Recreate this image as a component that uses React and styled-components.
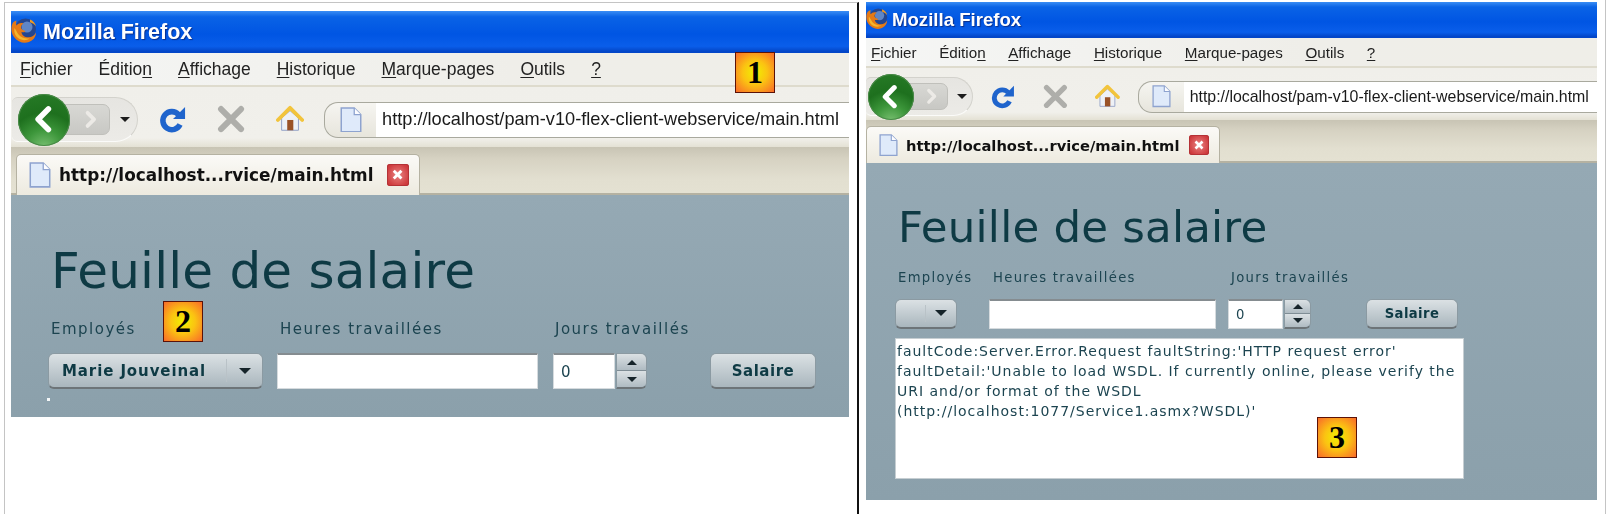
import React from 'react';
import styled, { createGlobalStyle, ThemeProvider } from 'styled-components';

const GlobalStyle = createGlobalStyle`
	html, body {
		margin: 0;
		padding: 0;
		background: #fff;
	}
`;

const large = {
	titleH: 42, titleFont: 21.5, titleGap: 6, logo: 26, menuH: 34, menuFont: 17.5, menuGap: 26, menuPad: 9,
	navH: 60, backSize: 52, clusterW: 126, clusterLeft: 1, clusterPad: 6, urlH: 34, urlFont: 18.2,
	tabStripH: 48, tabStripPad: 5, tabW: 404, tabH: 41, tabFont: 16.9, tabIcon: 22, closeSize: 22,
	contentPad: '49px 0 0 37px', headingFont: 50, headingMargin: 19,
	labelFont: 15, labelH: 21, labelSpacing: 1.5, rowMargin: 14, fieldH: 36, valueFont: 15, valueSpacing: 0.9, btnSpacing: 0.5,
	comboW: 215, comboArrow: 35, textW: 261, numW: 62, spinW: 31, btnW: 106,
	gapA: 14, gapB: 15, gapC: 63, labelA: 229, labelB: 275,
};

const small = {
	titleH: 36, titleFont: 18.6, titleGap: 4, logo: 22, menuH: 30, menuFont: 15.2, menuGap: 22.6, menuPad: 5,
	navH: 52, backSize: 46, clusterW: 107, clusterLeft: 0, clusterPad: 2, urlH: 30, urlFont: 15.9,
	tabStripH: 43, tabStripPad: 0, tabW: 354, tabH: 37, tabFont: 14.7, tabIcon: 19, closeSize: 20,
	contentPad: '41px 0 0 29px', headingFont: 43.5, headingMargin: 17,
	labelFont: 13.2, labelH: 18, labelSpacing: 1.3, rowMargin: 12, fieldH: 30, valueFont: 13.2, valueSpacing: 0.6, btnSpacing: 0.4,
	comboW: 62, comboArrow: 30, textW: 227, numW: 55, spinW: 27, btnW: 92,
	gapA: 32, gapB: 12, gapC: 55, labelA: 95, labelB: 238,
};

const Page = styled.div`
	position: relative;
	width: 1610px;
	height: 514px;
	display: flex;
	align-items: flex-start;
	overflow: hidden;
	background: #fff;
`;

const LeftPane = styled.section`
	box-sizing: border-box;
	width: 855px;
	height: 514px;
	margin-left: 4px;
	margin-top: 2px;
	padding: 8px 0 0 6px;
	border-top: 1px solid #c4c4c4;
	border-left: 1px solid #c4c4c4;
	border-right: 2px solid #111;
`;

const RightPane = styled.section`
	box-sizing: border-box;
	width: 747px;
	height: 514px;
	padding: 2px 0 0 7px;
	border-right: 1px solid #c4c4c4;
`;

const Window = styled.div`
	position: relative;
	width: ${(p) => p.$width}px;
	height: ${(p) => p.$height}px;
	display: flex;
	flex-direction: column;
	font-family: "DejaVu Sans", Verdana, sans-serif;
	filter: blur(0.35px);
`;

const TitleBar = styled.header`
	flex: none;
	height: ${(p) => p.theme.titleH}px;
	display: flex;
	align-items: center;
	gap: ${(p) => p.theme.titleGap}px;
	background: linear-gradient(#3a8df4 0%, #0a63e6 14%, #0055e3 55%, #0a5eea 84%, #0346c8 96%);
`;

const TitleText = styled.span`
	color: #fff;
	font-family: "Liberation Sans", Arial, sans-serif;
	font-weight: 700;
	font-size: ${(p) => p.theme.titleFont}px;
	text-shadow: 1px 1px 1px #0b2f8a;
`;

const MenuBar = styled.nav`
	flex: none;
	box-sizing: border-box;
	height: ${(p) => p.theme.menuH}px;
	display: flex;
	align-items: center;
	gap: ${(p) => p.theme.menuGap}px;
	padding-left: ${(p) => p.theme.menuPad}px;
	background: linear-gradient(90deg, #f5f6f5, #efeee9 60%, #efeee8);
	border-bottom: 2px solid #dedbcd;
	font-family: "Liberation Sans", Arial, sans-serif;
	font-size: ${(p) => p.theme.menuFont}px;
	color: #222;
`;

const MenuItem = styled.span`
	u {
		text-underline-offset: 2px;
		text-decoration-thickness: 1px;
	}
`;

const NavBar = styled.div`
	flex: none;
	box-sizing: border-box;
	height: ${(p) => p.theme.navH}px;
	display: flex;
	align-items: center;
	padding-top: 5px;
	background: linear-gradient(#f0efea, #f1f0eb 85%, #e4e1d4);
	overflow: hidden;
`;

const BackCluster = styled.div`
	flex: none;
	box-sizing: border-box;
	display: flex;
	align-items: center;
	width: ${(p) => p.theme.clusterW}px;
	height: ${(p) => p.theme.backSize * 0.86}px;
	margin-left: ${(p) => p.theme.clusterLeft}px;
	padding-left: ${(p) => p.theme.clusterPad}px;
	background: linear-gradient(#e6e5e1, #ecebe7);
	border: 1px solid #d3d2cc;
	border-left: none;
	border-bottom-color: #fbfbf9;
	border-radius: 6px 24px 24px 6px;
`;

const BackButton = styled.div`
	flex: none;
	display: flex;
	align-items: center;
	justify-content: center;
	width: ${(p) => p.theme.backSize}px;
	height: ${(p) => p.theme.backSize}px;
	border-radius: 50%;
	background: radial-gradient(circle at 50% 105%, #7cc274 0%, #3c963a 32%, #1e701e 60%, #287c28 100%);
	box-shadow: inset 0 0 0 1px #4a8a48;
	z-index: 1;
`;

const ForwardButton = styled.div`
	flex: none;
	box-sizing: border-box;
	display: flex;
	align-items: center;
	justify-content: center;
	width: ${(p) => p.theme.backSize * 0.96}px;
	height: ${(p) => p.theme.backSize * 0.6}px;
	margin-left: -10px;
	padding-left: 10px;
	background: linear-gradient(#d8d8d4, #c8c8c4);
	border: 1px solid #c0c0bb;
	border-radius: 0 7px 7px 0;
`;

const DropCaret = styled.div`
	width: 0;
	height: 0;
	margin-left: ${(p) => p.theme.backSize * 0.19}px;
	border-left: 5px solid transparent;
	border-right: 5px solid transparent;
	border-top: 5px solid #1c1c1c;
`;

const NavIcons = styled.div`
	flex: none;
	display: flex;
	align-items: center;
	gap: ${(p) => p.theme.backSize * 0.6}px;
	padding: 0 ${(p) => p.theme.backSize * 0.38}px;
`;

const UrlBar = styled.div`
	flex: 1;
	display: flex;
	align-items: center;
	min-width: 0;
	height: ${(p) => p.theme.urlH}px;
	border: 1px solid #a9a99e;
	border-right: none;
	border-radius: 14px 0 0 14px;
	background: linear-gradient(#f6f5f1, #e7e5dc);
	overflow: hidden;
`;

const UrlIcon = styled.div`
	flex: none;
	display: flex;
	justify-content: center;
	width: ${(p) => p.theme.backSize * 0.98}px;
`;

const UrlInput = styled.div`
	flex: 1;
	height: 100%;
	display: flex;
	align-items: center;
	padding-left: 6px;
	background: #fff;
	white-space: nowrap;
	font-family: "Liberation Sans", Arial, sans-serif;
	font-size: ${(p) => p.theme.urlFont}px;
	color: #1a1a1a;
`;

const TabStrip = styled.div`
	flex: none;
	box-sizing: border-box;
	height: ${(p) => p.theme.tabStripH}px;
	display: flex;
	align-items: flex-end;
	padding-left: ${(p) => p.theme.tabStripPad}px;
	background: linear-gradient(#c8c4b4, #d6d2c2 25%, #e2dfd0 70%, #e4e1d2);
	border-bottom: 2px solid #b5b2a2;
`;

const Tab = styled.div`
	box-sizing: border-box;
	width: ${(p) => p.theme.tabW}px;
	height: ${(p) => p.theme.tabH}px;
	margin-bottom: -2px;
	display: flex;
	align-items: center;
	padding: 0 10px 0 12px;
	background: linear-gradient(#fbfaf7, #edeadf);
	border: 1px solid #b5b2a2;
	border-bottom: none;
	border-radius: 5px 5px 0 0;
`;

const TabLabel = styled.span`
	flex: 1;
	margin-left: 8px;
	font-family: "DejaVu Sans", sans-serif;
	font-weight: 700;
	font-size: ${(p) => p.theme.tabFont}px;
	color: #111;
	white-space: nowrap;
`;

const CloseBox = styled.div`
	flex: none;
	display: flex;
	align-items: center;
	justify-content: center;
	width: ${(p) => p.theme.closeSize}px;
	height: ${(p) => p.theme.closeSize}px;
	border-radius: 3px;
	background: radial-gradient(circle at 50% 50%, #e98683, #cf3c3f 75%);
	box-shadow: inset 0 0 0 1px #b43236;
`;

const Content = styled.main`
	flex: 1;
	box-sizing: border-box;
	position: relative;
	padding: ${(p) => p.theme.contentPad};
	background: linear-gradient(#95a9b4, #8ba0ab);
	color: #0e3a44;
`;

const Heading = styled.h1`
	margin: 0 0 ${(p) => p.theme.headingMargin}px 3px;
	font-weight: 400;
	font-size: ${(p) => p.theme.headingFont}px;
	line-height: 1.1;
	letter-spacing: 0.2px;
	color: #0e3a44;
`;

const LabelRow = styled.div`
	display: flex;
	height: ${(p) => p.theme.labelH}px;
	align-items: center;
	padding-left: 3px;
`;

const FieldLabel = styled.label`
	flex: none;
	width: ${(p) => p.$width}px;
	font-size: ${(p) => p.theme.labelFont}px;
	letter-spacing: ${(p) => p.theme.labelSpacing}px;
	color: #1c4450;
	white-space: nowrap;
`;

const FieldRow = styled.div`
	display: flex;
	align-items: stretch;
	height: ${(p) => p.theme.fieldH}px;
	margin-top: ${(p) => p.theme.rowMargin}px;
`;

const Combo = styled.div`
	flex: none;
	box-sizing: border-box;
	width: ${(p) => p.theme.comboW}px;
	display: flex;
	align-items: center;
	border: 1px solid #8b9aa2;
	border-bottom: 2px solid #6d7478;
	border-radius: 6px;
	background: linear-gradient(#dbe1e4, #a9b6bd);
`;

const ComboValue = styled.span`
	flex: 1;
	padding-left: 13px;
	font-weight: 700;
	font-size: ${(p) => p.theme.valueFont}px;
	letter-spacing: ${(p) => p.theme.valueSpacing}px;
	color: #0e3a44;
	white-space: nowrap;
`;

const ComboArrow = styled.div`
	flex: none;
	width: ${(p) => p.theme.comboArrow}px;
	align-self: stretch;
	margin: 5px 0;
	display: flex;
	align-items: center;
	justify-content: center;
	border-left: 1px solid #b9c2c7;
`;

const Arrow = styled.div`
	width: 0;
	height: 0;
	border-left: ${(p) => p.$size}px solid transparent;
	border-right: ${(p) => p.$size}px solid transparent;
	border-${(p) => (p.$up ? 'bottom' : 'top')}: ${(p) => p.$size}px solid #16242a;
`;

const TextField = styled.div`
	flex: none;
	box-sizing: border-box;
	width: ${(p) => (p.$narrow ? p.theme.numW : p.theme.textW)}px;
	margin-left: ${(p) => (p.$narrow ? p.theme.gapB : p.theme.gapA)}px;
	display: flex;
	align-items: center;
	padding-left: 7px;
	background: #fff;
	border: 1px solid #d6dbde;
	border-top: 2px solid #858c90;
	font-size: ${(p) => p.theme.valueFont}px;
	color: #1c4450;
`;

const Spinner = styled.div`
	flex: none;
	box-sizing: border-box;
	width: ${(p) => p.theme.spinW}px;
	display: flex;
	flex-direction: column;
	margin-left: 1px;
	border: 1px solid #8b9aa2;
	border-bottom: 2px solid #6d7478;
	border-radius: 0 6px 6px 0;
	overflow: hidden;
`;

const SpinButton = styled.div`
	flex: 1;
	display: flex;
	align-items: center;
	justify-content: center;
	background: linear-gradient(#dbe1e4, #afbbc2);
	& + & {
		border-top: 1px solid #7f8d95;
	}
`;

const ActionButton = styled.button`
	flex: none;
	box-sizing: border-box;
	width: ${(p) => p.theme.btnW}px;
	margin-left: ${(p) => p.theme.gapC}px;
	padding: 0;
	font-family: inherit;
	font-weight: 700;
	font-size: ${(p) => p.theme.valueFont}px;
	letter-spacing: ${(p) => p.theme.btnSpacing}px;
	color: #0e3a44;
	border: 1px solid #8b9aa2;
	border-bottom: 2px solid #6d7478;
	border-radius: 6px;
	background: linear-gradient(#dbe1e4, #a9b6bd);
`;

const FaultBox = styled.div`
	box-sizing: border-box;
	width: 569px;
	height: 141px;
	margin-top: 9px;
	padding: 2px 0 0 1px;
	background: #fff;
	border: 1px solid #c6ced2;
	font-size: 14px;
	line-height: 20px;
	letter-spacing: 0.98px;
	color: #1c4450;
`;

const FaultLine = styled.div`
	white-space: nowrap;
`;

const Dot = styled.span`
	position: absolute;
	left: 36px;
	bottom: 16px;
	width: 3px;
	height: 3px;
	background: #f4f7f8;
`;

// numbered callouts pasted on top of the screenshots
const Badge = styled.div`
	position: absolute;
	left: ${(p) => p.$left}px;
	top: ${(p) => p.$top}px;
	box-sizing: border-box;
	width: 40px;
	height: 41px;
	display: flex;
	align-items: center;
	justify-content: center;
	border: 1px solid #5b1208;
	background: radial-gradient(circle, #f0f000 0%, #fbc312 45%, #f96a2a 100%);
	font-family: "Liberation Serif", "Times New Roman", serif;
	font-weight: 700;
	font-size: 32px;
	color: #000;
`;

const FirefoxLogo = ({ size }) => (
	<svg width={size} height={size} viewBox="0 0 26 26" style={{ flex: 'none', marginTop: -3 }}>
		<circle cx="14.500" cy="11" r="10.500" fill="#24468f" />
		<circle cx="16" cy="9" r="5.500" fill="#5f86c6" />
		<path d="M2 4.500C-.5 9 0 15 3 19c3.500 5 10 7 15 5 4-1.500 7-5 7-9.500-1.500 3-4 4.800-7.500 4.800-4 0-7-2.300-7-5.300 2 .7 3.500.2 4-1-2-.5-4.500-1.500-4.500-3.500 0-1.500 1-3 2.500-4C9.500 4.500 7 5.500 5.500 7.500 5 6 5 4.500 5.500 2.500 4.200 3 3 3.500 2 4.500z" fill="#e57a16" />
		<path d="M3.500 10C2.500 14 4.500 19 8.500 21c3.500 1.800 7.500 1.300 10-.5-4.500.5-8.500-1-11-4C6 14.500 5 12 3.500 10z" fill="#f4b62c" />
		<path d="M19 1.500c3 1 5.500 4 6 7-1.500-2-3.500-3.500-6-4.200z" fill="#ee9a22" />
	</svg>
);

const BackChevron = ({ size }) => (
	<svg width={size * 0.55} height={size * 0.55} viewBox="0 0 28 28">
		<path d="M18 4 L8 14 L18 24" fill="none" stroke="#fff" strokeWidth="5.500" strokeLinecap="round" strokeLinejoin="round" />
	</svg>
);

const ForwardChevron = ({ size }) => (
	<svg width={size} height={size} viewBox="0 0 20 20">
		<path d="M7 3 L14 10 L7 17" fill="none" stroke="#eceae6" strokeWidth="4" strokeLinecap="round" strokeLinejoin="round" />
	</svg>
);

const ReloadIcon = ({ size }) => (
	<svg width={size} height={size} viewBox="0 0 28 28">
		<path d="M20.500 9.500 A9 9 0 1 0 22 19.500" fill="none" stroke="#1f64cc" strokeWidth="5.500" />
		<path d="M27 2 V14 H15 Z" fill="#1f64cc" />
	</svg>
);

const StopIcon = ({ size }) => (
	<svg width={size} height={size} viewBox="0 0 28 28">
		<path d="M4 4 L24 24 M24 4 L4 24" stroke="#aeaeaa" strokeWidth="6" strokeLinecap="round" />
	</svg>
);

const HomeIcon = ({ size }) => (
	<svg width={size} height={size} viewBox="0 0 30 28">
		<path d="M6 13 V26 H24 V13 L15 5 Z" fill="#eef1f6" stroke="#8d9cc4" strokeWidth="1" />
		<rect x="12" y="15" width="6.500" height="11" fill="#9a5226" />
		<path d="M2 15 L15 2 L28 15" fill="none" stroke="#f2c43c" strokeWidth="4" strokeLinecap="round" strokeLinejoin="round" />
	</svg>
);

const PageIcon = ({ size }) => (
	<svg width={size} height={size * 1.18} viewBox="0 0 20 24" style={{ flex: 'none' }}>
		<path d="M1 1 H13 L19 7 V23 H1 Z" fill="#dfeafa" stroke="#8ea3cf" strokeWidth="1.400" />
		<path d="M13 1 V7 H19" fill="#fdfdff" stroke="#8ea3cf" strokeWidth="1.200" />
	</svg>
);

const CloseCross = ({ size }) => (
	<svg width={size} height={size} viewBox="0 0 12 12">
		<path d="M2.500 2.500 L9.500 9.500 M9.500 2.500 L2.500 9.500" stroke="#fff" strokeWidth="2.600" />
	</svg>
);

const menus = [
	['', 'F', 'ichier'],
	['Éditio', 'n', ''],
	['', 'A', 'ffichage'],
	['', 'H', 'istorique'],
	['', 'M', 'arque-pages'],
	['', 'O', 'utils'],
	['', '?', ''],
];

const Browser = ({ metrics, width, height, children }) => (
	<ThemeProvider theme={metrics}>
		<Window $width={width} $height={height}>
			<TitleBar>
				<FirefoxLogo size={metrics.logo} />
				<TitleText>Mozilla Firefox</TitleText>
			</TitleBar>
			<MenuBar>
				{menus.map(([before, key, after]) => (
					<MenuItem key={before + key}>
						{before}
						<u>{key}</u>
						{after}
					</MenuItem>
				))}
			</MenuBar>
			<NavBar>
				<BackCluster>
					<BackButton>
						<BackChevron size={metrics.backSize} />
					</BackButton>
					<ForwardButton>
						<ForwardChevron size={metrics.backSize * 0.36} />
					</ForwardButton>
					<DropCaret />
				</BackCluster>
				<NavIcons>
					<ReloadIcon size={metrics.backSize * 0.54} />
					<StopIcon size={metrics.backSize * 0.54} />
					<HomeIcon size={metrics.backSize * 0.54} />
				</NavIcons>
				<UrlBar>
					<UrlIcon>
						<PageIcon size={metrics.tabIcon} />
					</UrlIcon>
					<UrlInput>http://localhost/pam-v10-flex-client-webservice/main.html</UrlInput>
				</UrlBar>
			</NavBar>
			<TabStrip>
				<Tab>
					<PageIcon size={metrics.tabIcon} />
					<TabLabel>http://localhost...rvice/main.html</TabLabel>
					<CloseBox>
						<CloseCross size={metrics.closeSize * 0.6} />
					</CloseBox>
				</Tab>
			</TabStrip>
			<Content>{children}</Content>
		</Window>
	</ThemeProvider>
);

const SalaryForm = ({ metrics, employee }) => (
	<>
		<Heading>Feuille de salaire</Heading>
		<LabelRow>
			<FieldLabel $width={metrics.labelA}>Employés</FieldLabel>
			<FieldLabel $width={metrics.labelB}>Heures travaillées</FieldLabel>
			<FieldLabel>Jours travaillés</FieldLabel>
		</LabelRow>
		<FieldRow>
			<Combo>
				<ComboValue>{employee}</ComboValue>
				<ComboArrow>
					<Arrow $size={6} />
				</ComboArrow>
			</Combo>
			<TextField />
			<TextField $narrow>0</TextField>
			<Spinner>
				<SpinButton>
					<Arrow $size={5} $up />
				</SpinButton>
				<SpinButton>
					<Arrow $size={5} />
				</SpinButton>
			</Spinner>
			<ActionButton>Salaire</ActionButton>
		</FieldRow>
	</>
);

const App = () => (
	<Page>
		<GlobalStyle />
		<LeftPane>
			<Browser metrics={large} width={838} height={406}>
				<SalaryForm metrics={large} employee="Marie Jouveinal" />
				<Dot />
			</Browser>
		</LeftPane>
		<RightPane>
			<Browser metrics={small} width={731} height={498}>
				<SalaryForm metrics={small} />
				<FaultBox>
					<FaultLine>faultCode:Server.Error.Request faultString:'HTTP request error'</FaultLine>
					<FaultLine>faultDetail:'Unable to load WSDL. If currently online, please verify the</FaultLine>
					<FaultLine>URI and/or format of the WSDL</FaultLine>
					<FaultLine>(http://localhost:1077/Service1.asmx?WSDL)'</FaultLine>
				</FaultBox>
			</Browser>
		</RightPane>
		<Badge $left={735} $top={52}>1</Badge>
		<Badge $left={163} $top={301}>2</Badge>
		<Badge $left={1317} $top={417}>3</Badge>
	</Page>
);

export default App;
